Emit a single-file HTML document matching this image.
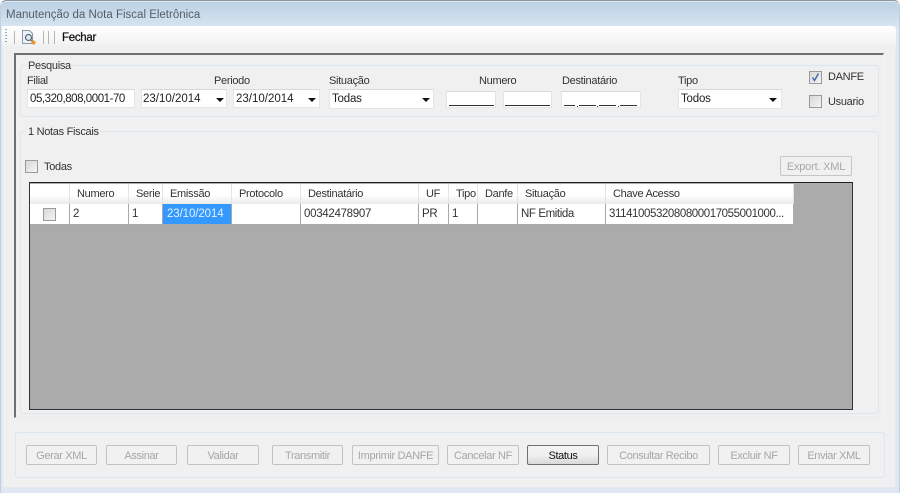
<!DOCTYPE html>
<html><head><meta charset="utf-8">
<style>
html,body{margin:0;padding:0;background:#fff;}
body{width:900px;height:493px;overflow:hidden;position:relative;font-family:"Liberation Sans",sans-serif;font-size:11px;color:#222;}
#root{position:absolute;left:0;top:0;width:900px;height:493px;overflow:hidden;filter:blur(.35px);}
#root div,#root span.t{position:absolute;box-sizing:border-box;white-space:nowrap;}
.t{line-height:13px;letter-spacing:-.3px;}
.in{background:#fff;border:1px solid #e2e5e9;border-top-color:#d6d9dc;}
.gb{border:1px solid #dce6ee;border-radius:3px;}
.cb{width:13px;height:13px;border:1px solid #9a9a9a;background:linear-gradient(135deg,#d8d8d8,#f4f4f4);}
.arr{width:0;height:0;border-left:4px solid transparent;border-right:4px solid transparent;border-top:4px solid #111;}
.btn{top:445px;height:20px;border:1px solid #c2c2c2;border-radius:2px;background:#f1f1f1;color:#a6a6a6;text-align:center;line-height:20px;font-size:11px;letter-spacing:-.35px;}
.hd{top:184px;height:20px;background:linear-gradient(#fff 0,#fff 55%,#ebebeb 100%);border-right:1px solid #e4e4e4;line-height:21px;color:#333;font-size:11px;padding-left:7px;letter-spacing:-.3px;}
.c{top:204px;height:21px;background:#fff;border-right:1px solid #a8a8a8;border-bottom:1px solid #a8a8a8;line-height:21px;padding-left:3px;color:#333;font-size:11.5px;letter-spacing:-.3px;}
.dot{width:1px;height:1px;background:#333;top:106px;}
</style></head><body>
<div id="root">
 <div style="left:0;top:0;width:900px;height:493px;background:#dfe8f2;border-top:1px solid #8f979e;border-left:1px solid #c4d0dc;border-right:1px solid #c4d0dc;border-radius:6px 6px 0 0;"></div>
 <div style="left:1px;top:2px;width:898px;height:24px;background:linear-gradient(#bcd1e4,#d6e4f0);border-radius:5px 5px 0 0;"></div>
 <span class="t" style="left:6px;top:9px;color:#555f68;font-size:11.5px;letter-spacing:0;position:absolute;">Manutenção da Nota Fiscal Eletrônica</span>

 <!-- client -->
 <div style="left:2px;top:26px;width:894px;height:462px;background:#f0f0f0;border:1px solid #e3e9f0;"></div>
 <div style="left:2px;top:26px;width:894px;height:23px;background:linear-gradient(#fff,#f6f6f6 60%,#eeeeee);border-radius:0 4px 0 0;"></div>

 <!-- toolbar -->
 <div style="left:5px;top:29px;width:2px;height:15px;background:repeating-linear-gradient(#9aa3aa 0 1px,transparent 1px 3px);"></div>
 <div style="left:14px;top:31px;width:1px;height:13px;background:#b5b5b5;"></div>
 <svg style="position:absolute;left:20px;top:29px;" width="18" height="17" viewBox="0 0 18 17">
  <path d="M2.500 1.500h7l3 3v10h-10z" fill="#eef2f8" stroke="#8a98ac"/>
  <circle cx="8.500" cy="8.500" r="3" fill="#dce9f8" stroke="#56697f" stroke-width="1.200"/>
  <path d="M10.500 10.500l2.500 2.500" stroke="#8a6a30" stroke-width="1.500"/>
  <circle cx="13.500" cy="13.500" r="2" fill="#e6952a"/>
 </svg>
 <div style="left:43px;top:31px;width:1px;height:13px;background:#b5b5b5;"></div>
 <div style="left:48px;top:31px;width:1px;height:13px;background:#b5b5b5;"></div>
 <div style="left:54px;top:31px;width:1px;height:13px;background:#b5b5b5;"></div>
 <span class="t" style="left:62px;top:32px;position:absolute;font-size:11.500px;color:#111;-webkit-text-stroke:.25px #111;">Fechar</span>

 <!-- inner panel -->
 <div style="left:14px;top:53px;width:870px;height:365px;border:1px solid #fff;border-top:2px solid #707070;border-left:2px solid #707070;border-right:1px solid #f4f6f8;border-bottom:1px solid #e6ecf2;"></div>

 <!-- Pesquisa -->
 <div class="gb" style="left:20px;top:65px;width:859px;height:52px;"></div>
 <div style="left:26px;top:60px;width:44px;height:10px;background:#f0f0f0;"></div>
 <span class="t" style="left:28px;top:60px;position:absolute;color:#333;">Pesquisa</span>
 <span class="t" style="left:27px;top:75px;position:absolute;color:#333;">Filial</span>
 <span class="t" style="left:214px;top:75px;position:absolute;color:#333;">Periodo</span>
 <span class="t" style="left:329px;top:75px;position:absolute;color:#333;">Situação</span>
 <span class="t" style="left:479px;top:75px;position:absolute;color:#333;">Numero</span>
 <span class="t" style="left:562px;top:75px;position:absolute;color:#333;">Destinatário</span>
 <span class="t" style="left:678px;top:75px;position:absolute;color:#333;">Tipo</span>

 <div class="in" style="left:27px;top:89px;width:108px;height:19px;line-height:19px;padding-left:2px;font-size:11.500px;letter-spacing:-.45px;">05,320,808,0001-70</div>
 <div class="in" style="left:141px;top:89px;width:86px;height:19px;line-height:19px;padding-left:1px;font-size:11.500px;">23/10/2014</div>
 <div class="arr" style="left:216px;top:98px;"></div>
 <div class="in" style="left:233px;top:89px;width:87px;height:19px;line-height:19px;padding-left:2px;font-size:11.500px;">23/10/2014</div>
 <div class="arr" style="left:308px;top:98px;"></div>
 <div class="in" style="left:329px;top:89px;width:105px;height:20px;line-height:18px;padding-left:2px;font-size:11.500px;letter-spacing:-.2px;">Todas</div>
 <div class="arr" style="left:422px;top:98px;"></div>

 <div class="in" style="left:446px;top:91px;width:50px;height:17px;"></div>
 <div style="left:449px;top:105px;width:45px;height:1px;background:#333;"></div>
 <div class="in" style="left:503px;top:91px;width:49px;height:17px;"></div>
 <div style="left:505px;top:105px;width:45px;height:1px;background:#333;"></div>
 <div class="in" style="left:561px;top:91px;width:80px;height:17px;"></div>
 <div style="left:564px;top:105px;width:11px;height:1px;background:#333;"></div>
 <div class="dot" style="left:577px;"></div>
 <div style="left:579px;top:105px;width:17px;height:1px;background:#333;"></div>
 <div class="dot" style="left:597px;"></div>
 <div style="left:599px;top:105px;width:17px;height:1px;background:#333;"></div>
 <div class="dot" style="left:618px;"></div>
 <div style="left:620px;top:105px;width:17px;height:1px;background:#333;"></div>
 <div class="in" style="left:678px;top:89px;width:104px;height:20px;line-height:18px;padding-left:2px;font-size:11.500px;letter-spacing:-.2px;">Todos</div>
 <div class="arr" style="left:769px;top:98px;"></div>

 <div class="cb" style="left:809px;top:71px;"></div>
 <svg style="position:absolute;left:810px;top:72px;" width="11" height="11" viewBox="0 0 11 11"><path d="M2.500 5.500l2 3 4-7" fill="none" stroke="#4a6aa8" stroke-width="1.500"/></svg>
 <span class="t" style="left:828px;top:71px;position:absolute;color:#333;font-size:11px;">DANFE</span>
 <div class="cb" style="left:809px;top:95px;"></div>
 <span class="t" style="left:828px;top:96px;position:absolute;color:#333;">Usuario</span>

 <!-- Notas -->
 <div class="gb" style="left:20px;top:131px;width:859px;height:283px;"></div>
 <div style="left:26px;top:126px;width:74px;height:10px;background:#f0f0f0;"></div>
 <span class="t" style="left:28px;top:126px;position:absolute;color:#333;">1 Notas Fiscais</span>
 <div class="cb" style="left:25px;top:160px;"></div>
 <span class="t" style="left:44px;top:161px;position:absolute;color:#333;font-size:11px;">Todas</span>
 <div style="left:780px;top:156px;width:72px;height:20px;border:1px solid #c6c6c6;border-radius:2px;text-align:center;line-height:20px;color:#a8a8a8;font-size:11px;letter-spacing:-.2px;">Export. XML</div>

 <!-- grid -->
 <div style="left:29px;top:182px;width:824px;height:228px;background:#ababab;border:1px solid #333;border-top:1px solid #222;"></div>
 <div class="hd" style="left:30px;width:40px;"></div>
 <div class="hd" style="left:70px;width:59px;">Numero</div>
 <div class="hd" style="left:129px;width:34px;">Serie</div>
 <div class="hd" style="left:163px;width:69px;">Emissão</div>
 <div class="hd" style="left:232px;width:69px;">Protocolo</div>
 <div class="hd" style="left:301px;width:118px;">Destinatário</div>
 <div class="hd" style="left:419px;width:30px;">UF</div>
 <div class="hd" style="left:449px;width:29px;">Tipo</div>
 <div class="hd" style="left:478px;width:40px;">Danfe</div>
 <div class="hd" style="left:518px;width:88px;">Situação</div>
 <div class="hd" style="left:606px;width:188px;">Chave Acesso</div>

 <div class="c" style="left:30px;width:40px;"></div>
 <div class="cb" style="left:43px;top:208px;"></div>
 <div class="c" style="left:70px;width:59px;">2</div>
 <div class="c" style="left:129px;width:34px;">1</div>
 <div class="c" style="left:163px;width:69px;background:#3399ff;color:#e6f0ff;padding-left:4px;letter-spacing:-.1px;">23/10/2014</div>
 <div class="c" style="left:232px;width:69px;"></div>
 <div class="c" style="left:301px;width:118px;">00342478907</div>
 <div class="c" style="left:419px;width:30px;">PR</div>
 <div class="c" style="left:449px;width:29px;">1</div>
 <div class="c" style="left:478px;width:40px;"></div>
 <div class="c" style="left:518px;width:88px;letter-spacing:-.4px;">NF Emitida</div>
 <div class="c" style="left:606px;width:187px;border-right:0;letter-spacing:-.42px;">3114100532080800017055001000...</div>

 <!-- bottom -->
 <div class="gb" style="left:15px;top:432px;width:870px;height:46px;"></div>
 <div class="btn" style="left:26px;width:71px;">Gerar XML</div>
 <div class="btn" style="left:106px;width:71px;">Assinar</div>
 <div class="btn" style="left:187px;width:72px;">Validar</div>
 <div class="btn" style="left:272px;width:71px;">Transmitir</div>
 <div class="btn" style="left:352px;width:87px;">Imprimir DANFE</div>
 <div class="btn" style="left:447px;width:72px;">Cancelar NF</div>
 <div class="btn" style="left:527px;width:72px;border-color:#707070;background:linear-gradient(#f4f4f4,#f0f0f0 50%,#d8d8d8);color:#111;">Status</div>
 <div class="btn" style="left:607px;width:103px;">Consultar Recibo</div>
 <div class="btn" style="left:718px;width:72px;">Excluir NF</div>
 <div class="btn" style="left:798px;width:72px;">Enviar XML</div>
</div>
</body></html>
